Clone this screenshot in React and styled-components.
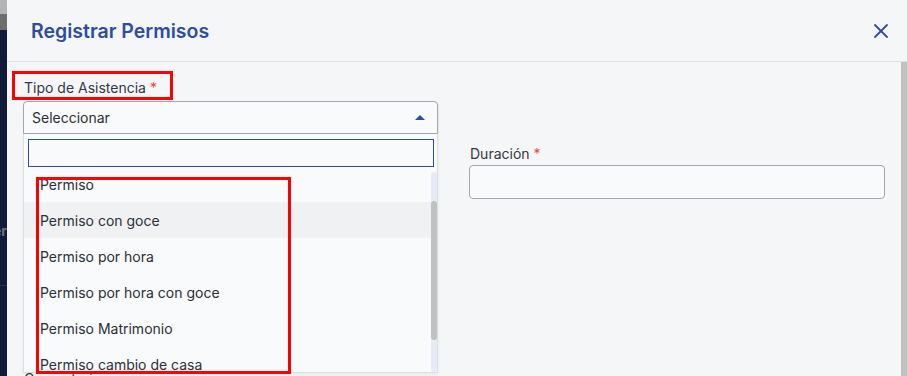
import React from 'react';
import styled, { createGlobalStyle } from 'styled-components';
import { X } from 'lucide-react';

const GlobalStyle = createGlobalStyle`
  html, body {
    margin: 0;
    padding: 0;
    background: #111b38;
    font-family: Inter, "Noto Sans", "Liberation Sans", sans-serif;
  }
  * { box-sizing: border-box; }
`;

const ROW_H = 36;
const LIST_H = 200;
const SCROLL_TOP = 42;

const Page = styled.div`
  position: relative;
  display: flex;
  width: 907px;
  height: 376px;
  overflow: hidden;
`;

const Backdrop = styled.div`
  width: 7px;
  flex: none;
  display: flex;
  flex-direction: column;
  background: #111b38;
  overflow: hidden;
`;

const BackdropBar = styled.div`
  height: ${p => p.h}px;
  background: ${p => p.bg};
  flex: none;
`;

const BackdropText = styled.div`
  display: flex;
  justify-content: flex-end;
  padding-top: 192px;
  font-size: 14px;
  font-weight: 700;
  color: #6c7080;
  white-space: nowrap;
  height: 256px;
  border-bottom: 1px solid #2a3350;
`;

const Modal = styled.div`
  flex: 1;
  display: flex;
  flex-direction: column;
  background: #f5f6f8;
  min-width: 0;
`;

const Header = styled.div`
  height: 62px;
  flex: none;
  display: flex;
  align-items: center;
  justify-content: space-between;
  padding: 0 14px 0 24px;
  border-bottom: 1px solid #dfe1e5;
`;

const Title = styled.h2`
  margin: 0;
  font-size: 19.5px;
  font-weight: 600;
  color: #2f4ca3;
`;

const CloseButton = styled.button`
  border: 0;
  background: none;
  padding: 0;
  display: flex;
  color: #2f4ca3;
  cursor: pointer;
`;

const Body = styled.div`
  flex: 1;
  display: flex;
  min-height: 0;
`;

const Content = styled.div`
  flex: 1;
  padding: 16px 16px 0 16px;
  display: flex;
  flex-direction: column;
  gap: 12px;
`;

const Grid = styled.div`
  display: grid;
  grid-template-columns: 415px 1fr;
  column-gap: 31px;
  row-gap: 8px;
  align-items: start;
`;

const Field = styled.div`
  position: relative;
  display: flex;
  flex-direction: column;
  gap: ${p => p.gap ?? 3}px;
`;

const Label = styled.label`
  font-size: 14px;
  line-height: 20px;
  color: #333844;
  padding-left: 1px;
`;

const Req = styled.span`
  color: #ef4444;
`;

const Input = styled.div`
  height: 34px;
  border: 1px solid #a3a6ad;
  border-radius: 4px;
  background: #f9fafb;
`;

const TextArea = styled(Input)`
  height: 127px;
`;

const SelectBox = styled.div`
  height: 33px;
  display: flex;
  align-items: center;
  justify-content: space-between;
  padding: 0 12px 0 8px;
  border: 1px solid #a3a6ad;
  border-radius: 4px 4px 0 0;
  background: #f9fafb;
  font-size: 14px;
  color: #2b2f38;
  box-shadow: 1px 1px 2px rgba(0, 0, 0, 0.06);
`;

const Caret = styled.span`
  width: 0;
  height: 0;
  border-left: 5px solid transparent;
  border-right: 5px solid transparent;
  border-bottom: 5px solid #2f4ca3;
`;

const Dropdown = styled.div`
  position: absolute;
  top: 56px;
  left: 0;
  right: 0;
  z-index: 5;
  height: 239px;
  display: flex;
  flex-direction: column;
  gap: 5px;
  padding-top: 5px;
  background: #f9fafb;
  border: 1px solid #dcdee2;
  border-top: 0;
  box-shadow: 0 2px 4px rgba(0, 0, 0, 0.05);
`;

const Search = styled.div`
  height: 28px;
  margin: 0 3px 0 4px;
  border: 1px solid #2f4ca3;
  background: #f9fafb;
  flex: none;
`;

const ListWrap = styled.div`
  display: flex;
  height: ${LIST_H}px;
  flex: none;
`;

const List = styled.ul`
  flex: 1;
  list-style: none;
  margin: 0;
  padding: 0;
  overflow: hidden;
`;

const Option = styled.li`
  height: ${ROW_H}px;
  display: flex;
  align-items: center;
  padding-left: 16px;
  font-size: 14px;
  color: #2b2f38;
  background: ${p => (p.active ? '#f0f1f3' : 'transparent')};
`;

const Track = styled.div`
  width: 6px;
  flex: none;
  display: flex;
  flex-direction: column;
  background: #e8ebf5;
  border-radius: 3px;
`;

const Thumb = styled.div`
  flex: none;
  background: #c1c1c1;
  border-radius: 3px;
`;

const ScrollRail = styled.div`
  width: 6px;
  flex: none;
  background: #c1c1c1;
`;

const Annotation = styled.div`
  position: absolute;
  border: 3px solid #ff0000;
  pointer-events: none;
  z-index: 10;
`;

const options = [
  'Licencia',
  'Permiso',
  'Permiso con goce',
  'Permiso por hora',
  'Permiso por hora con goce',
  'Permiso Matrimonio',
  'Permiso cambio de casa',
  'Permiso por fallecimiento',
];

export default function App() {
  const total = options.length * ROW_H;
  const thumbH = (LIST_H * LIST_H) / total;
  const thumbTop = (SCROLL_TOP * LIST_H) / total;

  return (
    <>
      <GlobalStyle />
      <Page>
        <Backdrop>
          <BackdropBar h={14} bg="#b4b4b4" />
          <BackdropBar h={16} bg="#6e6e6e" />
          <BackdropText>Per</BackdropText>
        </Backdrop>
        <Modal>
          <Header>
            <Title>Registrar Permisos</Title>
            <CloseButton aria-label="Cerrar">
              <X size={24} strokeWidth={1.8} />
            </CloseButton>
          </Header>
          <Body>
            <Content>
              <Grid>
                <Field>
                  <Label>Tipo de Asistencia <Req>*</Req></Label>
                  <SelectBox>
                    Seleccionar
                    <Caret />
                  </SelectBox>
                  <Dropdown>
                    <Search />
                    <ListWrap>
                      <List>
                        <div style={{ marginTop: -SCROLL_TOP }}>
                          {options.map((o, i) => (
                            <Option key={o} active={i === 2}>{o}</Option>
                          ))}
                        </div>
                      </List>
                      <Track>
                        <Thumb style={{ marginTop: thumbTop, height: thumbH }} />
                      </Track>
                    </ListWrap>
                  </Dropdown>
                </Field>
                <div />
                <Field>
                  <Label>Fecha <Req>*</Req></Label>
                  <Input />
                </Field>
                <Field gap={1}>
                  <Label style={{ marginTop: 2 }}>Duración <Req>*</Req></Label>
                  <Input />
                </Field>
                <Field>
                  <Label>Motivo</Label>
                  <TextArea />
                </Field>
              </Grid>
              <Field>
                <Label>Comentario</Label>
                <TextArea />
              </Field>
            </Content>
            <ScrollRail />
          </Body>
        </Modal>
        <Annotation style={{ left: 12, top: 71, width: 161, height: 29 }} />
        <Annotation style={{ left: 36, top: 177, width: 255, height: 197 }} />
      </Page>
    </>
  );
}
